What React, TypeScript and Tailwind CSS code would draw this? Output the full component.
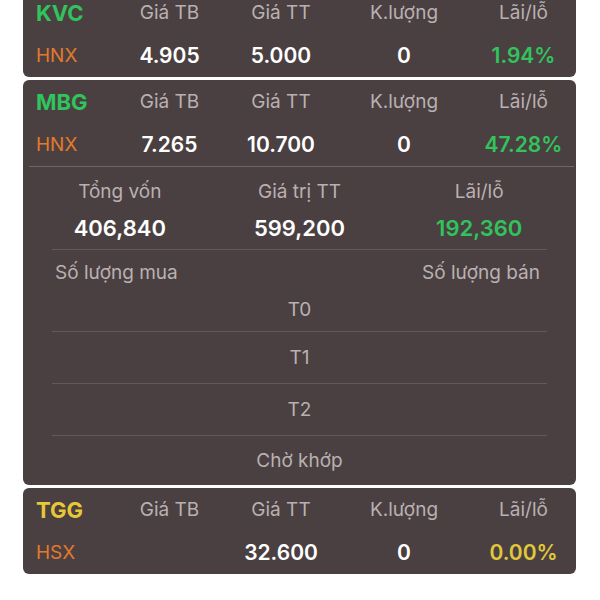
const COLS = "grid grid-cols-[78px_111px_112px_134px_1fr] items-center";

type Stock = {
  code: string;
  codeColor: string;
  exchange: string;
  avg: string;
  price: string;
  qty: string;
  pl: string;
  plColor: string;
};

const kvc: Stock = { code: "KVC", codeColor: "text-[#31c35c]", exchange: "HNX", avg: "4.905", price: "5.000", qty: "0", pl: "1.94%", plColor: "text-[#31c35c]" };
const mbg: Stock = { code: "MBG", codeColor: "text-[#31c35c]", exchange: "HNX", avg: "7.265", price: "10.700", qty: "0", pl: "47.28%", plColor: "text-[#31c35c]" };
const tgg: Stock = { code: "TGG", codeColor: "text-[#e8c935]", exchange: "HSX", avg: "", price: "32.600", qty: "0", pl: "0.00%", plColor: "text-[#e1c73a]" };

function StockRows({ s }: { s: Stock }) {
  return (
    <>
      <div className={`${COLS} h-[42px] pl-[13px] pt-[3px] text-[19px] text-[#b9b1b1]`}>
        <span className={`text-[22px] font-bold ${s.codeColor}`}>{s.code}</span>
        <span className="text-center">Giá TB</span>
        <span className="text-center">Giá TT</span>
        <span className="text-center">K.lượng</span>
        <span className="text-center">Lãi/lỗ</span>
      </div>
      <div className={`${COLS} h-[44px] pl-[13px] pt-[2px] text-[21px] font-semibold text-white`}>
        <span className="text-[19px] font-normal text-[#e27a2c]">{s.exchange}</span>
        <span className="text-center">{s.avg}</span>
        <span className="text-center">{s.price}</span>
        <span className="text-center">{s.qty}</span>
        <span className={`text-center ${s.plColor}`}>{s.pl}</span>
      </div>
    </>
  );
}

function Card({ children, className = "" }: { children: React.ReactNode; className?: string }) {
  return <div className={`w-[553px] rounded-[6px] bg-[#4a4041] ${className}`}>{children}</div>;
}

export default function App() {
  return (
    <div
      className="h-[600px] w-[600px] overflow-hidden bg-white"
      style={{ fontFamily: "Inter, 'Noto Sans', sans-serif" }}
    >
      <div className="-mt-[9px] flex flex-col gap-[3px] pl-[23px]">
        <Card>
          <StockRows s={kvc} />
        </Card>

        <Card>
          <StockRows s={mbg} />
          <div className="ml-[6px] mr-[2px] h-px bg-[#6f6566]" />

          {/* summary */}
          <div className="grid grid-cols-3 px-[7px] pt-[10px] pb-[2px] text-center">
            <span className="h-[30px] text-[19px] leading-[30px] text-[#b9b1b1]">Tổng vốn</span>
            <span className="h-[30px] text-[19px] leading-[30px] text-[#b9b1b1]">Giá trị TT</span>
            <span className="h-[30px] text-[19px] leading-[30px] text-[#b9b1b1]">Lãi/lỗ</span>
            <span className="h-[40px] text-[22px] font-semibold leading-[42px] text-white">406,840</span>
            <span className="h-[40px] text-[22px] font-semibold leading-[42px] text-white">599,200</span>
            <span className="h-[40px] text-[22px] font-semibold leading-[42px] text-[#31c35c]">192,360</span>
          </div>

          <div className="mx-[29px] text-[19px] text-[#b9b1b1]">
            <div className="h-px bg-[#625859]" />
            <div className="flex h-[44px] items-center justify-between pl-[3px] pr-[7px] pt-[2px]">
              <span>Số lượng mua</span>
              <span>Số lượng bán</span>
            </div>
            <div className="flex h-[37px] items-center justify-center pb-[4px]">T0</div>
            <div className="h-px bg-[#625859]" />
            <div className="flex h-[51px] items-center justify-center pt-[2px]">T1</div>
            <div className="h-px bg-[#625859]" />
            <div className="flex h-[51px] items-center justify-center pt-[2px]">T2</div>
            <div className="h-px bg-[#625859]" />
            <div className="flex h-[49px] items-center justify-center pt-[2px]">Chờ khớp</div>
          </div>
        </Card>

        <Card>
          <StockRows s={tgg} />
        </Card>
      </div>
    </div>
  );
}
